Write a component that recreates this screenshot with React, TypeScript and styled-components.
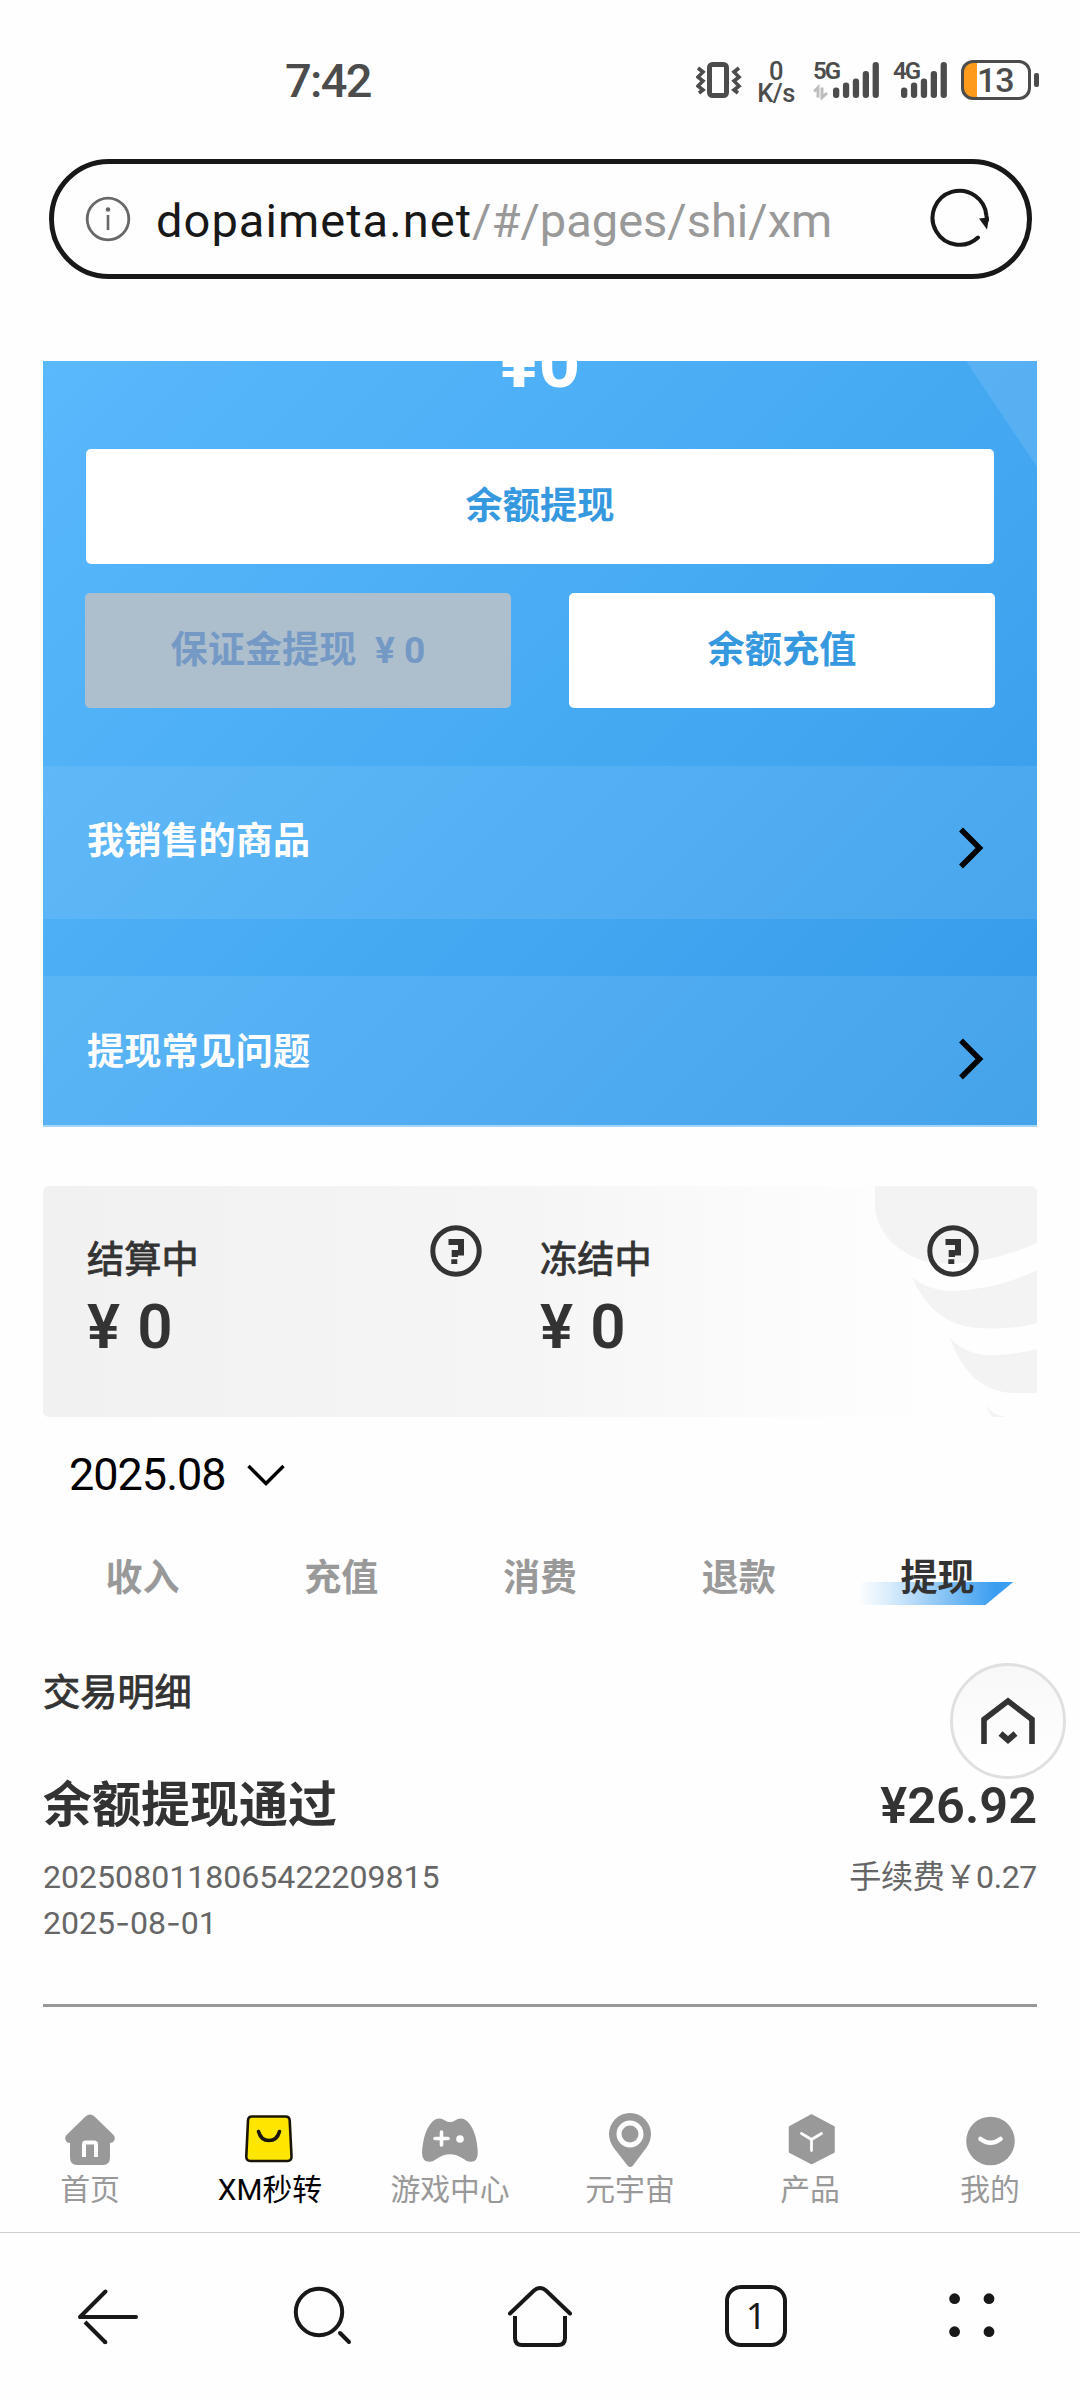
import React from "react";
import styled, { createGlobalStyle } from "styled-components";

const GlobalStyle = createGlobalStyle`
  * { box-sizing: border-box; }
  html, body { margin: 0; padding: 0; background: #fefefe; }
  body {
    font-family: Roboto, "Noto Sans CJK SC", sans-serif;
    color: #333;
  }
  svg { display: block; flex: none; }
`;

const Screen = styled.div`
  width: 1080px;
  height: 2400px;
  display: flex;
  flex-direction: column;
  background: #fefefe;
  overflow: hidden;
`;

/* ---------- system status bar ---------- */

const StatusBar = styled.header`
  height: 159px;
  flex: none;
  display: flex;
  justify-content: space-between;
  align-items: flex-start;
  padding: 60px 41px 0 285px;
  color: #4c4c4c;
`;

const Clock = styled.time`
  font-size: 47px;
  line-height: 42px;
  font-weight: 500;
  letter-spacing: -1.7px;
`;

const StatusIcons = styled.div`
  display: flex;
  height: 40px;
`;

const NetSpeed = styled.div`
  width: 40px;
  margin-left: 14px;
  display: flex;
  flex-direction: column;
  align-items: center;
  font-size: 25.5px;
  line-height: 22px;
  font-weight: 500;
  letter-spacing: -0.5px;
`;

const Signal = styled.div<{ $gap: number }>`
  display: grid;
  width: 66px;
  height: 40px;
  margin-left: ${(p) => p.$gap}px;
  & > * { grid-area: 1 / 1; }
`;

const SignalLabel = styled.span`
  font-size: 24px;
  line-height: 23px;
  font-weight: 600;
  letter-spacing: -2px;
`;

const Battery = styled.div`
  width: 70px;
  height: 40px;
  margin-left: 2px;
  border: 3px solid #4c4c4c;
  border-radius: 12px;
  background: linear-gradient(to right, #ff9b1c 13px, transparent 13px);
  font-size: 34px;
  line-height: 35px;
  font-weight: 500;
  padding-left: 13px;
  letter-spacing: -1px;
`;

const BatteryTip = styled.div`
  width: 5px;
  height: 14px;
  margin: 13px 0 0 3px;
  border-radius: 2px;
  background: #4c4c4c;
`;

/* ---------- address bar ---------- */

const AddressBar = styled.div`
  height: 120px;
  flex: none;
  margin: 0 48px 82px 49px;
  border: 5px solid #181818;
  border-radius: 60px;
  display: flex;
  align-items: center;
  padding: 0 35px 0 31px;
`;

const Url = styled.div`
  flex: 1;
  margin-left: 25px;
  padding-top: 3px;
  font-size: 47px;
  line-height: 60px;
  color: #999;
  white-space: nowrap;
`;

const Host = styled.span`
  color: #181818;
  letter-spacing: 1.05px;
`;

/* ---------- blue balance card ---------- */

const BalanceCard = styled.section`
  height: 766px;
  flex: none;
  margin: 0 43px;
  position: relative;
  overflow: hidden;
  border-bottom: 2px solid #a5d6f8;
  background: linear-gradient(135deg, #5ab8fc 0%, #47abf3 48%, #3fa3ef 72%, #349be9 100%);
`;

const CornerFacet = styled.div`
  position: absolute;
  top: 0;
  right: 0;
  width: 71px;
  height: 106px;
  background: rgba(255, 255, 255, 0.1);
  clip-path: polygon(0 0, 100% 0, 100% 100%);
`;

const BalanceAmount = styled.div`
  height: 122px;
  margin-top: -34px;
  font-size: 73px;
  line-height: 70px;
  font-weight: 700;
  color: #fff;
  text-align: center;
`;

const ButtonRow = styled.div<{ $inset: number; $gap: number }>`
  display: flex;
  gap: 58px;
  margin: 0 ${(p) => p.$inset}px ${(p) => p.$gap}px;
`;

const CardButton = styled.button<{ $disabled?: boolean }>`
  flex: 1;
  height: 115px;
  border: 0;
  border-radius: 5px;
  padding: 0 0 8px;
  font: inherit;
  font-size: 37.2px;
  font-weight: 700;
  white-space: pre;
  color: ${(p) => (p.$disabled ? "#7599c5" : "#3699e0")};
  background: ${(p) => (p.$disabled ? "#adbfcd" : "#fff")};
`;

const LinkRow = styled.a<{ $height: number; $gap: number; $top: number }>`
  display: flex;
  justify-content: space-between;
  height: ${(p) => p.$height}px;
  margin-bottom: ${(p) => p.$gap}px;
  padding: ${(p) => p.$top}px 53px 0 44px;
  background: rgba(255, 255, 255, 0.085);
  color: #fff;
  font-size: 37.2px;
  line-height: 40px;
  font-weight: 700;

  svg { margin-top: 6px; }
`;

/* ---------- settlement card ---------- */

const SettleCard = styled.section`
  height: 231px;
  flex: none;
  margin: 59px 43px 0;
  display: grid;
  grid-template-columns: 453px 1fr;
  border-radius: 6px;
  overflow: hidden;
  position: relative;
  background: linear-gradient(to right, #f1f1f1 0%, #f5f5f5 48%, #fbfbfb 73%, #fefefe 90%);
`;

const Ribbons = styled.svg`
  position: absolute;
  top: 0;
  right: 0;
`;

const SettleItem = styled.div<{ $right: number }>`
  position: relative;
  display: flex;
  justify-content: space-between;
  padding: 39px ${(p) => p.$right}px 0 44px;
`;

const SettleText = styled.div`
  padding-top: 15px;
`;

const SettleLabel = styled.div`
  font-size: 37.2px;
  line-height: 40px;
  -webkit-text-stroke: 0.9px #333;
`;

const SettleValue = styled.div`
  margin-top: 17px;
  font-size: 62px;
  line-height: 60px;
  font-weight: 600;
  letter-spacing: 0.9px;
`;

/* ---------- month and category filters ---------- */

const MonthPicker = styled.div`
  display: flex;
  align-items: center;
  gap: 21px;
  height: 60px;
  margin: 28px 0 0 69px;
  font-size: 45px;
  line-height: 60px;
  letter-spacing: -1px;
  color: #000;

  svg { margin-top: 1px; }
`;

const Tabs = styled.nav`
  flex: none;
  display: grid;
  grid-template-columns: repeat(5, 1fr);
  margin: 49px 43px 0;
  height: 52px;
`;

const Tab = styled.div<{ $active?: boolean }>`
  position: relative;
  text-align: center;
  font-size: 37px;
  line-height: 49px;
  font-weight: 700;
  color: ${(p) => (p.$active ? "#333" : "#999")};

  span { position: relative; }
`;

const TabMark = styled.i`
  position: absolute;
  left: 21px;
  top: 28px;
  width: 154px;
  height: 23px;
  background: linear-gradient(to right, rgba(62, 162, 240, 0) 0%, rgba(62, 162, 240, 0.22) 22%, #3b9ef0 88%);
  clip-path: polygon(0 0, 100% 0, 82% 100%, 0 100%);
`;

/* ---------- transactions ---------- */

const Details = styled.section`
  flex: none;
  position: relative;
  height: 401px;
  margin: 0 43px;
  padding-top: 67px;
  border-bottom: 3px solid #999;
`;

const DetailsTitle = styled.h2`
  margin: 0 0 63px;
  font-size: 37.2px;
  line-height: 40px;
  font-weight: 400;
  -webkit-text-stroke: 0.9px #333;
`;

const Line = styled.div`
  display: flex;
  justify-content: space-between;
`;

const Title = styled.div`
  font-size: 49px;
  line-height: 60px;
  font-weight: 700;
`;

const Amount = styled(Title)`
  font-size: 50.5px;
  font-weight: 600;
`;

const Meta = styled.div`
  margin-top: 18px;
  font-size: 32.1px;
  line-height: 46px;
  color: #666;
`;

const Fee = styled(Meta)`
  letter-spacing: -0.4px;
`;

const Dash = styled.span`
  font-family: Inter, sans-serif;
`;

const HomeFloat = styled.button`
  position: absolute;
  top: 57px;
  right: -29px;
  width: 116px;
  height: 116px;
  padding: 0;
  border: 3px solid #e0e0e0;
  border-radius: 50%;
  background: linear-gradient(#f8f8f8, #fff);
  display: grid;
  place-items: center;
`;

/* ---------- site navigation ---------- */

const SiteNav = styled.nav`
  flex: none;
  display: grid;
  grid-template-columns: repeat(6, 1fr);
  height: 226px;
  padding-top: 101px;
  border-bottom: 1px solid #cdcdcd;
`;

const NavItem = styled.div<{ $active?: boolean }>`
  display: flex;
  flex-direction: column;
  align-items: center;
  font-size: 29.8px;
  line-height: 40px;
  color: ${(p) => (p.$active ? "#000" : "#999")};
`;

const BrowserBar = styled.footer`
  flex: 1;
  display: grid;
  grid-template-columns: repeat(5, 1fr);
  justify-items: center;
  padding-top: 47px;
`;

const TabCount = styled.div`
  width: 62px;
  height: 62px;
  margin-top: 5px;
  border: 4px solid #181818;
  border-radius: 16px;
  font-family: "Noto Sans", sans-serif;
  font-size: 36px;
  line-height: 54px;
  text-align: center;
  color: #181818;
`;

/* ---------- drawings ---------- */

const VibrateIcon = () => (
  <svg width="46" height="40" viewBox="0 0 46 40" fill="none" stroke="#4c4c4c">
    <rect x="13.5" y="4.5" width="17" height="31" rx="3" strokeWidth="5" />
    <path d="M2 8l5 4-5 5 5 4-5 5 5 4-4 3M43 8l-5 4 5 5-5 4 5 5-5 4 4 3" strokeWidth="3.6" />
  </svg>
);

const Bars = ({ x, arrows }: { x: number; arrows?: boolean }) => (
  <svg width="66" height="40" viewBox="0 0 66 40">
    {[27.5, 22.5, 18.5, 11, 2].map((y, i) => (
      <rect key={y} x={x + i * 9.9} y={y} width="6.3" height={38 - y} rx="3" fill="#4c4c4c" />
    ))}
    {arrows && (
      <path d="M5 37.500V27.500L1 31.500M9 27.500V37.500L14 33" fill="none" stroke="#bdbdbd" strokeWidth="3" />
    )}
  </svg>
);

const InfoIcon = () => (
  <svg width="46" height="46" viewBox="0 0 46 46">
    <circle cx="23" cy="23" r="20.800" fill="none" stroke="#686868" strokeWidth="2.800" />
    <circle cx="23" cy="13.500" r="2.300" fill="#686868" />
    <path d="M23 19v15" stroke="#686868" strokeWidth="2.600" />
  </svg>
);

const ReloadIcon = () => (
  <svg width="64" height="62" viewBox="0 0 64 62">
    <path d="M50 49.500A27 27 0 1 1 58.500 28L59 32" fill="none" stroke="#181818" strokeWidth="4" strokeLinecap="round" />
    <path d="M51 30.500L61 29.500L59 41.500Z" fill="#181818" />
  </svg>
);

const ChevronRight = () => (
  <svg width="26" height="42" viewBox="0 0 26 42">
    <path d="M3 2.500L21.500 21L3 39.500" fill="none" stroke="#000" strokeWidth="5.500" />
  </svg>
);

const HelpIcon = () => (
  <svg width="52" height="52" viewBox="0 0 52 52">
    <circle cx="26" cy="26" r="23.200" fill="none" stroke="#333" strokeWidth="5" />
    <path d="M18.500 14H34V30.500H28V32H21.700V25H28V20H18.500ZM21.300 34.300H27.300V39H21.300Z" fill="#333" />
  </svg>
);

const HomeOutline = () => (
  <svg width="56" height="48" viewBox="0 0 56 48" fill="none" stroke="#333" strokeWidth="5.600">
    <path d="M4 47V22.500L28 4L52 22.500V47" />
    <path d="M20.500 36.500L28 43L35.500 36.500" strokeWidth="6" />
  </svg>
);

const NavHome = () => (
  <svg width="60" height="62" viewBox="0 0 60 62">
    <path d="M25.500 8.500Q30 4.500 34.500 8.500L53 26.500Q56 29.500 54 33Q53 35 50 35V49Q50 57 43 57H17Q10 57 10 49V35Q7 35 6 33Q4 29.500 7 26.500Z" fill="#999" />
    <path d="M24 49V36Q24 34.500 26 34.500H34Q36 34.500 36 36V49" fill="none" stroke="#fefefe" strokeWidth="4" />
  </svg>
);

const NavBag = () => (
  <svg width="60" height="62" viewBox="0 0 60 62">
    <path d="M12 8.500H45.500Q49.500 8.500 49.700 12.500L51.500 48Q51.700 53 47.500 53H10.500Q6 53 6.300 48L8 12.500Q8.200 8.500 12 8.500Z" fill="#ffe600" stroke="#1a1508" strokeWidth="2.600" />
    <path d="M18.500 23.500Q21 32.500 29 32.500Q37 32.500 39.500 23.500" fill="none" stroke="#1a1508" strokeWidth="3.600" strokeLinecap="round" />
  </svg>
);

const NavGame = () => (
  <svg width="60" height="62" viewBox="0 0 60 62">
    <path d="M13 13Q19 8.500 25 12.500Q30 15.500 35 12.500Q41 8.500 47 13Q57 23 57.800 45Q57.500 55 49 53.500Q46 53 43 50.500Q30 42 17 50.500Q14 53 11 53.500Q2.500 55 2 45Q3 23 13 13Z" fill="#999" />
    <path d="M21.500 24V37M15 30.500H28" stroke="#fefefe" strokeWidth="3.600" strokeLinecap="round" />
    <circle cx="40" cy="31" r="3.800" fill="#fefefe" />
  </svg>
);

const NavPin = () => (
  <svg width="60" height="62" viewBox="0 0 60 62">
    <path d="M30 5A21 21 0 0 1 51 26Q51 33 46.500 39.500L33 57.500Q30 60.500 27.500 57.500L13.500 39.500Q9 33 9 26A21 21 0 0 1 30 5Z" fill="#999" />
    <circle cx="30" cy="26" r="11" fill="none" stroke="#fefefe" strokeWidth="5" />
  </svg>
);

const NavBox = () => (
  <svg width="60" height="62" viewBox="0 0 60 62">
    <path d="M31.500 7L54 19V44L31.500 55.500L9.500 44V19Z" fill="#999" stroke="#999" strokeWidth="1.500" strokeLinejoin="round" />
    <path d="M21.500 25.500L31.500 31.500L41.500 25.500M31.500 31.500V42.500" fill="none" stroke="#fefefe" strokeWidth="2.800" strokeLinecap="round" />
  </svg>
);

const NavFace = () => (
  <svg width="60" height="62" viewBox="0 0 60 62">
    <circle cx="30.500" cy="33" r="24.300" fill="#999" />
    <path d="M20.500 31Q30.500 38.500 40.500 31" fill="none" stroke="#fefefe" strokeWidth="4.600" strokeLinecap="round" />
  </svg>
);

const barIcon = { width: 72, height: 72, viewBox: "0 0 72 72", fill: "none", stroke: "#181818", strokeWidth: 4, strokeLinecap: "round" as const };

const BackIcon = () => (
  <svg {...barIcon}>
    <path d="M33.500 11.500L8 37H64" strokeLinejoin="round" />
    <path d="M33.500 62.500L13 42" strokeLinecap="butt" />
    <circle cx="33.300" cy="62.300" r="2" fill="#181818" stroke="none" />
  </svg>
);

const SearchIcon = () => (
  <svg {...barIcon}>
    <circle cx="31" cy="32" r="23.200" />
    <path d="M52 53L61 62" strokeLinecap="round" />
  </svg>
);

const HomeIcon = () => (
  <svg {...barIcon}>
    <path d="M6 33.500L30 10.500Q36 5.500 42 10.500L66 33.500" />
    <path d="M11 36V58Q11 65 18 65H54Q61 65 61 58V36" strokeLinecap="butt" />
  </svg>
);

const MenuIcon = () => (
  <svg {...barIcon} fill="#181818" stroke="none">
    {[18.600, 53].map((x) =>
      [18.700, 51.700].map((y) => <circle key={`${x}-${y}`} cx={x} cy={y} r="5.400" />)
    )}
  </svg>
);

const tabs = ["收入", "充值", "消费", "退款", "提现"];

const navItems = [
  { label: "首页", Icon: NavHome },
  { label: "XM秒转", Icon: NavBag },
  { label: "游戏中心", Icon: NavGame },
  { label: "元宇宙", Icon: NavPin },
  { label: "产品", Icon: NavBox },
  { label: "我的", Icon: NavFace },
];

export default function App() {
  return (
    <>
      <GlobalStyle />
      <Screen>
        <StatusBar>
          <Clock>7:42</Clock>
          <StatusIcons>
            <VibrateIcon />
            <NetSpeed>
              <span>0</span>
              <span>K/s</span>
            </NetSpeed>
            <Signal $gap={17}>
              <SignalLabel>5G</SignalLabel>
              <Bars x={20} arrows />
            </Signal>
            <Signal $gap={14}>
              <SignalLabel>4G</SignalLabel>
              <Bars x={8} />
            </Signal>
            <Battery>13</Battery>
            <BatteryTip />
          </StatusIcons>
        </StatusBar>

        <AddressBar>
          <InfoIcon />
          <Url>
            <Host>dopaimeta.net</Host>/#/pages/shi/xm
          </Url>
          <ReloadIcon />
        </AddressBar>

        <BalanceCard>
          <CornerFacet />
          <BalanceAmount>¥0</BalanceAmount>
          <ButtonRow $inset={43} $gap={29}>
            <CardButton>余额提现</CardButton>
          </ButtonRow>
          <ButtonRow $inset={42} $gap={58}>
            <CardButton $disabled>{"保证金提现  ¥ 0"}</CardButton>
            <CardButton>余额充值</CardButton>
          </ButtonRow>
          <LinkRow $height={153} $gap={57} $top={55}>
            我销售的商品
            <ChevronRight />
          </LinkRow>
          <LinkRow $height={149} $gap={0} $top={56}>
            提现常见问题
            <ChevronRight />
          </LinkRow>
        </BalanceCard>

        <SettleCard>
          <Ribbons width="162" height="231" viewBox="0 0 162 231" fill="#f3f3f3">
            <path d="M0 0V25Q8 62 51 76Q100 84 162 57V0Z" />
            <path d="M37 91Q52 104 76 105Q122 104 162 84V137Q140 144 101 142Q57 138 37 91Z" />
            <path d="M75 152Q93 171 121 169Q145 168 162 163V207H139Q94 206 75 152Z" />
            <path d="M111 219Q118 230 132 231H118Q114 228 111 219Z" />
          </Ribbons>
          <SettleItem $right={14}>
            <SettleText>
              <SettleLabel>结算中</SettleLabel>
              <SettleValue>¥ 0</SettleValue>
            </SettleText>
            <HelpIcon />
          </SettleItem>
          <SettleItem $right={58}>
            <SettleText>
              <SettleLabel>冻结中</SettleLabel>
              <SettleValue>¥ 0</SettleValue>
            </SettleText>
            <HelpIcon />
          </SettleItem>
        </SettleCard>

        <MonthPicker>
          2025.08
          <svg width="38" height="24" viewBox="0 0 38 24">
            <path d="M1.500 2L19 19.500L36.500 2" fill="none" stroke="#000" strokeWidth="3.400" />
          </svg>
        </MonthPicker>

        <Tabs>
          {tabs.map((label) => (
            <Tab key={label} $active={label === "提现"}>
              {label === "提现" && <TabMark />}
              <span>{label}</span>
            </Tab>
          ))}
        </Tabs>

        <Details>
          <DetailsTitle>交易明细</DetailsTitle>
          <Line>
            <Title>余额提现通过</Title>
            <Amount>¥26.92</Amount>
          </Line>
          <Line>
            <Meta>
              2025080118065422209815
              <br />
              2025<Dash>-</Dash>08<Dash>-</Dash>01
            </Meta>
            <Fee>手续费￥0.27</Fee>
          </Line>
          <HomeFloat aria-label="首页">
            <HomeOutline />
          </HomeFloat>
        </Details>

        <SiteNav>
          {navItems.map(({ label, Icon }) => (
            <NavItem key={label} $active={label === "XM秒转"}>
              <Icon />
              {label}
            </NavItem>
          ))}
        </SiteNav>

        <BrowserBar>
          <BackIcon />
          <SearchIcon />
          <HomeIcon />
          <TabCount>1</TabCount>
          <MenuIcon />
        </BrowserBar>
      </Screen>
    </>
  );
}
